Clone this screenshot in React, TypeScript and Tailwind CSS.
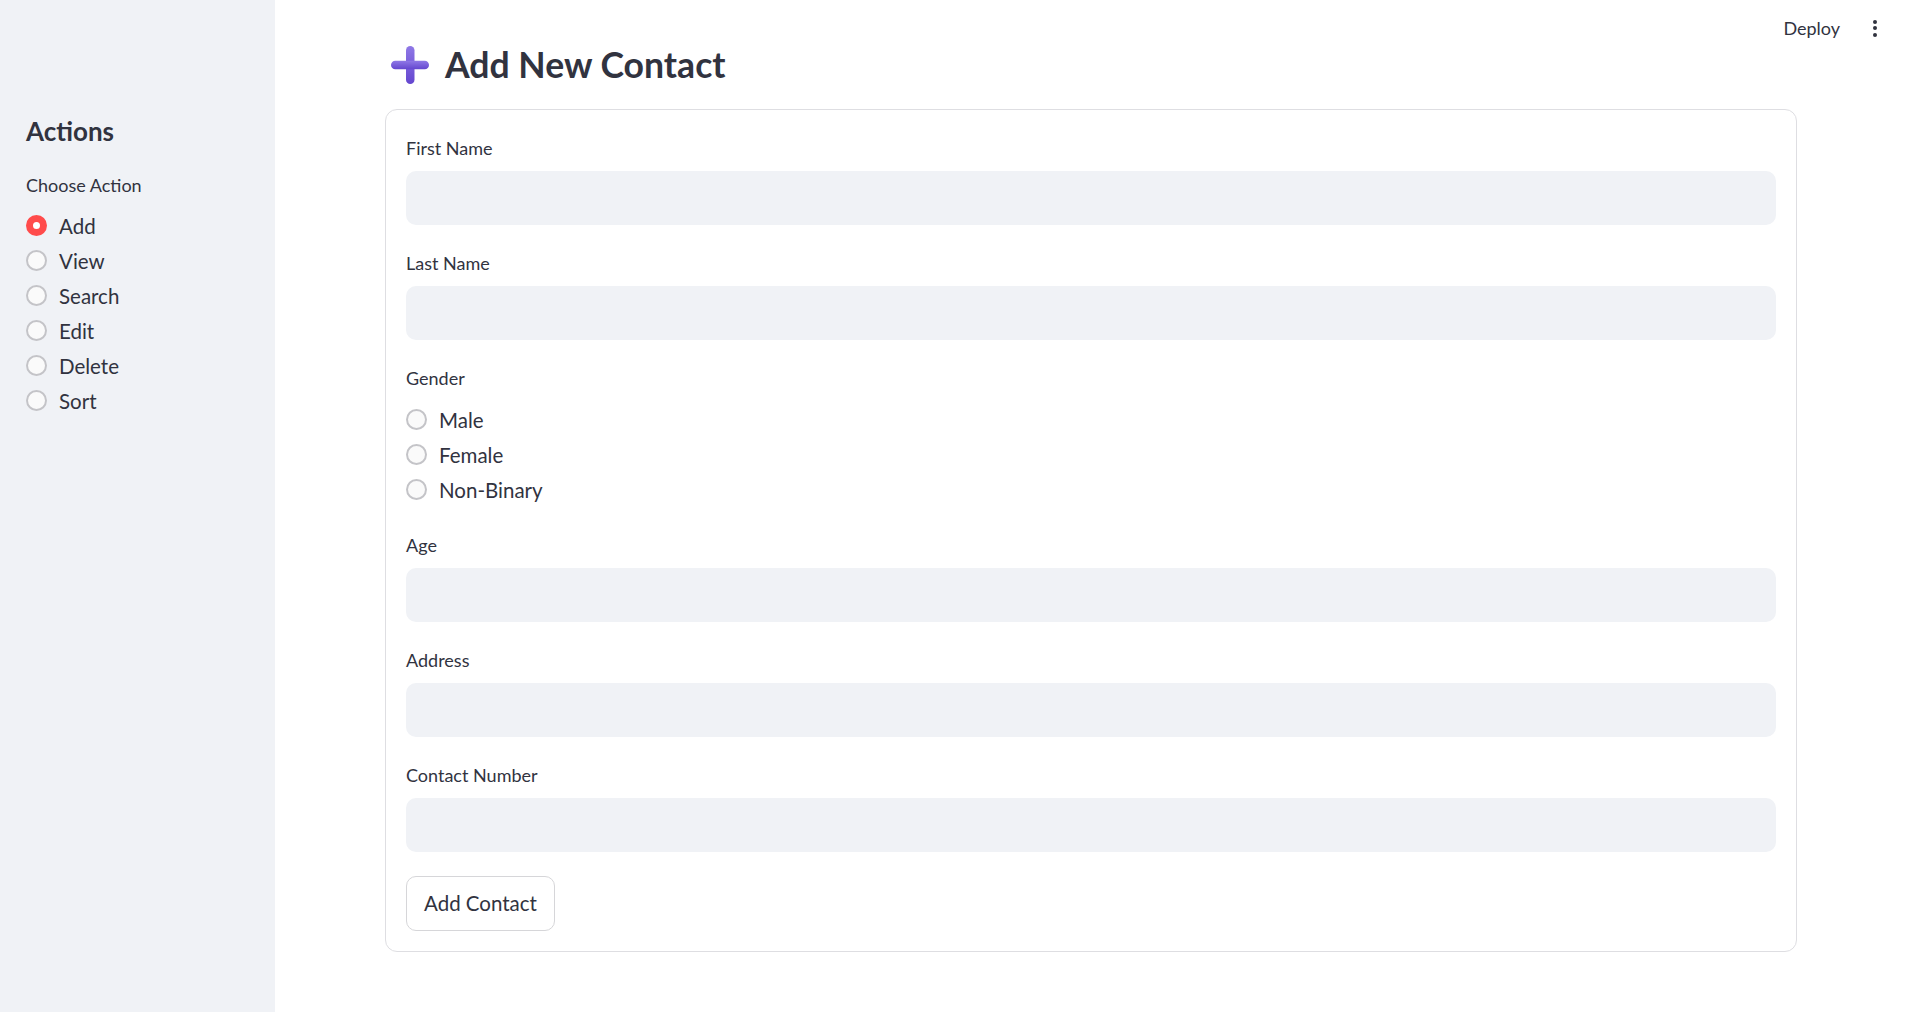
import { useState } from 'react';

const FONT = { fontFamily: 'Lato, "Noto Sans", sans-serif' };

function Radio({ label, checked, onSelect }: { label: string; checked: boolean; onSelect: () => void }) {
  return (
    <button type="button" onClick={onSelect} className="flex items-center h-[35px] gap-[12px] text-left">
      {checked ? (
        <span className="w-[21px] h-[21px] rounded-full border-[7px] border-[#ff4b4b] bg-white shrink-0" />
      ) : (
        <span className="w-[21px] h-[21px] rounded-full border-2 border-[#c4c4c8] bg-[#fafafa] shrink-0" />
      )}
      <span className="text-[20.5px] text-[#31333f] leading-[28px]">{label}</span>
    </button>
  );
}

function Field({ label, value, onChange }: { label: string; value: string; onChange: (v: string) => void }) {
  return (
    <div className="flex flex-col">
      <div className="h-[41px] pt-[4px]">
        <label className="text-[18px] leading-[28px] text-[#31333f]">{label}</label>
      </div>
      <input
        value={value}
        onChange={(e) => onChange(e.target.value)}
        className="h-[54px] w-full rounded-[10px] bg-[#f0f2f6] px-4 text-[20px] text-[#31333f] outline-none"
      />
    </div>
  );
}

function PlusIcon() {
  return (
    <svg width="38" height="38" viewBox="0 0 38 38">
      <defs>
        <linearGradient id="pg" x1="0" y1="0" x2="0" y2="1">
          <stop offset="0" stopColor="#8f78e6" />
          <stop offset="1" stopColor="#6446cf" />
        </linearGradient>
      </defs>
      <rect x="15" y="0" width="8.5" height="38" rx="4.25" fill="url(#pg)" />
      <rect x="0" y="14.75" width="38" height="8.5" rx="4.25" fill="url(#pg)" />
    </svg>
  );
}

export default function App() {
  const actions = ['Add', 'View', 'Search', 'Edit', 'Delete', 'Sort'];
  const [action, setAction] = useState('Add');
  const [gender, setGender] = useState('');
  const [form, setForm] = useState({ first: '', last: '', age: '', address: '', phone: '' });

  const set = (k: keyof typeof form) => (v: string) => setForm({ ...form, [k]: v });

  return (
    <div className="flex min-h-screen h-[1012px] bg-white text-[#31333f]" style={FONT}>
      {/* Sidebar */}
      <aside className="w-[275px] shrink-0 bg-[#f0f2f6] pt-[115px] px-[26px]">
        <h2 className="text-[26px] leading-[32px] font-bold">Actions</h2>
        <div className="mt-[24px] h-[37px]">
          <span className="text-[18px] leading-[28px]">Choose Action</span>
        </div>
        <div className="flex flex-col">
          {actions.map((a) => (
            <Radio key={a} label={a} checked={action === a} onSelect={() => setAction(a)} />
          ))}
        </div>
      </aside>

      {/* Main */}
      <main className="flex-1 flex flex-col">
        <header className="h-[56px] flex items-center justify-end pr-[30px] gap-[33px]">
          <span className="text-[18px] text-[#31333f]">Deploy</span>
          <div className="flex flex-col gap-[2.5px] items-center">
            <span className="w-[4px] h-[4px] rounded-full bg-[#31333f]" />
            <span className="w-[4px] h-[4px] rounded-full bg-[#31333f]" />
            <span className="w-[4px] h-[4px] rounded-full bg-[#31333f]" />
          </div>
        </header>

        <div className="px-[110px] -mt-[10px]">
          <div className="flex items-center gap-[16px] h-[38px] pl-[6px]">
            <PlusIcon />
            <h1 className="text-[35.6px] font-bold leading-[38px] text-[#31333f]">Add New Contact</h1>
          </div>

          <div className="mt-[25px] border border-[#dedee2] rounded-[12px] px-[20px] pt-[20px] pb-[20px]">
            <div className="flex flex-col gap-[20px]">
              <Field label="First Name" value={form.first} onChange={set('first')} />
              <Field label="Last Name" value={form.last} onChange={set('last')} />
              <div className="flex flex-col">
                <div className="h-[42px] pt-[4px]">
                  <span className="text-[18px] leading-[28px]">Gender</span>
                </div>
                {['Male', 'Female', 'Non-Binary'].map((g) => (
                  <Radio key={g} label={g} checked={gender === g} onSelect={() => setGender(g)} />
                ))}
              </div>
              <Field label="Age" value={form.age} onChange={set('age')} />
              <Field label="Address" value={form.address} onChange={set('address')} />
              <Field label="Contact Number" value={form.phone} onChange={set('phone')} />
            </div>
            <button
              type="button"
              className="mt-[24px] h-[55px] px-[17px] rounded-[10px] border border-[#d6d6d9] bg-white text-[20.5px] text-[#31333f]"
            >
              Add Contact
            </button>
          </div>
        </div>
      </main>
    </div>
  );
}
